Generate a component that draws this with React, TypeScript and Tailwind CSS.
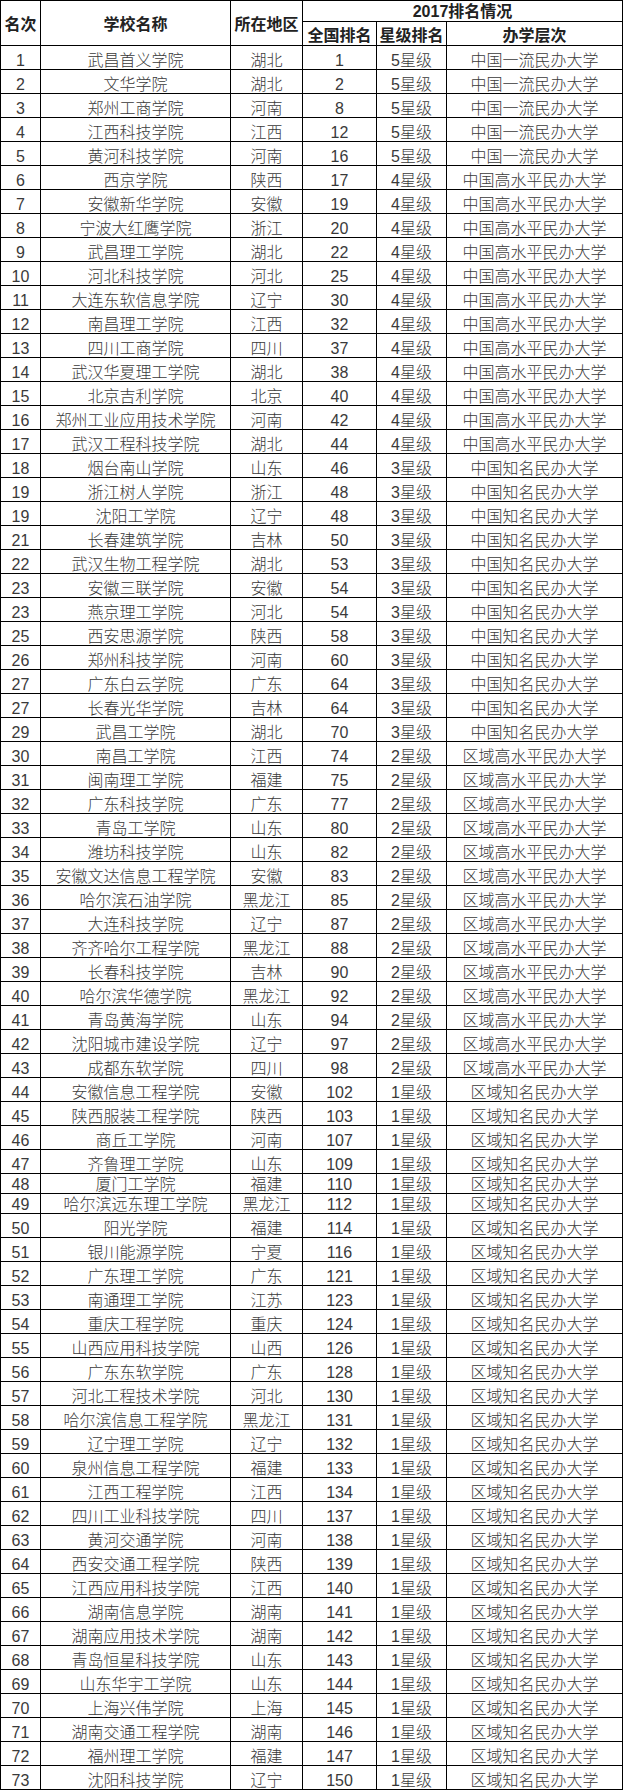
const data: [number, string, string, number, number][] = [
  [1, "武昌首义学院", "湖北", 1, 5],
  [2, "文华学院", "湖北", 2, 5],
  [3, "郑州工商学院", "河南", 8, 5],
  [4, "江西科技学院", "江西", 12, 5],
  [5, "黄河科技学院", "河南", 16, 5],
  [6, "西京学院", "陕西", 17, 4],
  [7, "安徽新华学院", "安徽", 19, 4],
  [8, "宁波大红鹰学院", "浙江", 20, 4],
  [9, "武昌理工学院", "湖北", 22, 4],
  [10, "河北科技学院", "河北", 25, 4],
  [11, "大连东软信息学院", "辽宁", 30, 4],
  [12, "南昌理工学院", "江西", 32, 4],
  [13, "四川工商学院", "四川", 37, 4],
  [14, "武汉华夏理工学院", "湖北", 38, 4],
  [15, "北京吉利学院", "北京", 40, 4],
  [16, "郑州工业应用技术学院", "河南", 42, 4],
  [17, "武汉工程科技学院", "湖北", 44, 4],
  [18, "烟台南山学院", "山东", 46, 3],
  [19, "浙江树人学院", "浙江", 48, 3],
  [19, "沈阳工学院", "辽宁", 48, 3],
  [21, "长春建筑学院", "吉林", 50, 3],
  [22, "武汉生物工程学院", "湖北", 53, 3],
  [23, "安徽三联学院", "安徽", 54, 3],
  [23, "燕京理工学院", "河北", 54, 3],
  [25, "西安思源学院", "陕西", 58, 3],
  [26, "郑州科技学院", "河南", 60, 3],
  [27, "广东白云学院", "广东", 64, 3],
  [27, "长春光华学院", "吉林", 64, 3],
  [29, "武昌工学院", "湖北", 70, 3],
  [30, "南昌工学院", "江西", 74, 2],
  [31, "闽南理工学院", "福建", 75, 2],
  [32, "广东科技学院", "广东", 77, 2],
  [33, "青岛工学院", "山东", 80, 2],
  [34, "潍坊科技学院", "山东", 82, 2],
  [35, "安徽文达信息工程学院", "安徽", 83, 2],
  [36, "哈尔滨石油学院", "黑龙江", 85, 2],
  [37, "大连科技学院", "辽宁", 87, 2],
  [38, "齐齐哈尔工程学院", "黑龙江", 88, 2],
  [39, "长春科技学院", "吉林", 90, 2],
  [40, "哈尔滨华德学院", "黑龙江", 92, 2],
  [41, "青岛黄海学院", "山东", 94, 2],
  [42, "沈阳城市建设学院", "辽宁", 97, 2],
  [43, "成都东软学院", "四川", 98, 2],
  [44, "安徽信息工程学院", "安徽", 102, 1],
  [45, "陕西服装工程学院", "陕西", 103, 1],
  [46, "商丘工学院", "河南", 107, 1],
  [47, "齐鲁理工学院", "山东", 109, 1],
  [48, "厦门工学院", "福建", 110, 1],
  [49, "哈尔滨远东理工学院", "黑龙江", 112, 1],
  [50, "阳光学院", "福建", 114, 1],
  [51, "银川能源学院", "宁夏", 116, 1],
  [52, "广东理工学院", "广东", 121, 1],
  [53, "南通理工学院", "江苏", 123, 1],
  [54, "重庆工程学院", "重庆", 124, 1],
  [55, "山西应用科技学院", "山西", 126, 1],
  [56, "广东东软学院", "广东", 128, 1],
  [57, "河北工程技术学院", "河北", 130, 1],
  [58, "哈尔滨信息工程学院", "黑龙江", 131, 1],
  [59, "辽宁理工学院", "辽宁", 132, 1],
  [60, "泉州信息工程学院", "福建", 133, 1],
  [61, "江西工程学院", "江西", 134, 1],
  [62, "四川工业科技学院", "四川", 137, 1],
  [63, "黄河交通学院", "河南", 138, 1],
  [64, "西安交通工程学院", "陕西", 139, 1],
  [65, "江西应用科技学院", "江西", 140, 1],
  [66, "湖南信息学院", "湖南", 141, 1],
  [67, "湖南应用技术学院", "湖南", 142, 1],
  [68, "青岛恒星科技学院", "山东", 143, 1],
  [69, "山东华宇工学院", "山东", 144, 1],
  [70, "上海兴伟学院", "上海", 145, 1],
  [71, "湖南交通工程学院", "湖南", 146, 1],
  [72, "福州理工学院", "福建", 147, 1],
  [73, "沈阳科技学院", "辽宁", 150, 1],
];

const levels: Record<number, string> = {
  5: "中国一流民办大学",
  4: "中国高水平民办大学",
  3: "中国知名民办大学",
  2: "区域高水平民办大学",
  1: "区域知名民办大学",
};

function Cell({ children, short }: { children: React.ReactNode; short?: boolean }) {
  return (
    <div
      className={`bg-white flex items-end justify-center whitespace-nowrap leading-[16px] font-light ${
        short ? "h-[19px]" : "h-[23px]"
      }`}
    >
      {children}
    </div>
  );
}

export default function App() {
  return (
    <div className="w-[626px] h-[1792px] bg-white">
      <div
        className="grid grid-cols-[39px_189px_71px_73px_69px_175px] gap-px bg-black p-px w-[623px] text-[16px] text-[#3a3a3a]"
        style={{ fontFamily: '"Liberation Sans", "Noto Sans CJK SC", sans-serif' }}
      >
        <div className="row-span-2 bg-white flex items-center justify-center pt-1 font-bold text-[#222]">名次</div>
        <div className="row-span-2 bg-white flex items-center justify-center pt-1 font-bold text-[#222]">学校名称</div>
        <div className="row-span-2 bg-white flex items-center justify-center pt-1 font-bold text-[#222]">所在地区</div>
        <div className="col-span-3 h-[20px] bg-white flex items-end justify-center leading-[16px] pb-px font-bold text-[#222]">
          2017排名情况
        </div>
        <div className="h-[23px] bg-white flex items-end justify-center leading-[16px] pb-px font-bold text-[#222]">全国排名</div>
        <div className="h-[23px] bg-white flex items-end justify-center leading-[16px] pb-px font-bold text-[#222]">星级排名</div>
        <div className="h-[23px] bg-white flex items-end justify-center leading-[16px] pb-px font-bold text-[#222]">办学层次</div>

        {data.map(([rank, name, area, nat, star], i) => {
          const short = i === 47 || i === 48;
          return [
            <Cell key={`a${i}`} short={short}>{rank}</Cell>,
            <Cell key={`b${i}`} short={short}>{name}</Cell>,
            <Cell key={`c${i}`} short={short}>{area}</Cell>,
            <Cell key={`d${i}`} short={short}>{nat}</Cell>,
            <Cell key={`e${i}`} short={short}>{star}星级</Cell>,
            <Cell key={`f${i}`} short={short}>{levels[star]}</Cell>,
          ];
        })}
      </div>
    </div>
  );
}
